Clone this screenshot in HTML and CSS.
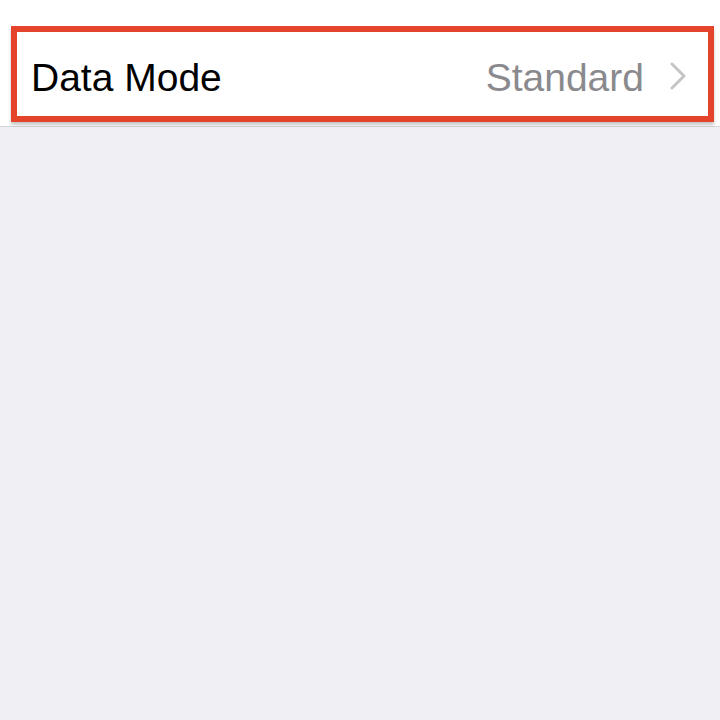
FILE: index.html
```html
<!DOCTYPE html>
<html lang="en">
<head>
<title>Data Mode</title>
<meta name="viewport" content="width=device-width, initial-scale=1.0">
<link rel="stylesheet" href="styles.css">
</head>
<body>
<div class="top">
  <div class="row">
    <span class="label">Data Mode</span>
    <span class="value">Standard</span>
    <svg class="chevron" width="20" height="28" viewBox="0 0 20 28">
      <path d="M4 2 L16 14 L4 26" fill="none" stroke="#c5c5c8" stroke-width="3" stroke-linecap="round" stroke-linejoin="round"/>
    </svg>
  </div>
</div>
</body>
</html>
```

FILE: styles.css
```css
* {
  padding: 0;
  margin: 0;
  box-sizing: border-box;
}

html, body {
  height: 100%;
}

body {
  background-color: #f0eff4;
  font-family: 'Liberation Sans', Arial, sans-serif;
}

.top {
  background-color: #fff;
  height: 127px;
  padding-top: 26px;
  border-bottom: 1px solid #d6d6da;
}

.row {
  display: flex;
  align-items: center;
  height: 96px;
  margin-left: 11px;
  margin-right: 6px;
  padding: 8px 20px 0 14px;
  border: 6px solid #e4442b;
  box-shadow: 0 3px 3px rgba(0, 0, 0, 0.22);
}

.label {
  flex-grow: 1;
  font-size: 39px;
  color: #000;
}

.value {
  font-size: 39px;
  color: #8a8a8e;
  margin-right: 24px;
}

.chevron {
  display: block;
  margin-top: -4px;
}
```
